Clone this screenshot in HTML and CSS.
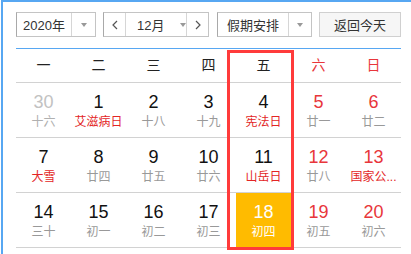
FILE: index.html
```html
<!DOCTYPE html>
<html lang="zh-CN">
  <head>
    <meta charset="UTF-8" />
    <title>万年历</title>
    <link rel="stylesheet" href="styles.css">
  </head>
  <body>
    <div class="calendar">
      <div class="toolbar">
        <div class="select year-select">
          <span class="select-text">2020年</span>
          <span class="select-arrow"><i class="caret"></i></span>
        </div>
        <div class="month-group">
          <span class="nav-btn">
            <svg width="6" height="10" viewBox="0 0 6 10"><polyline points="5,1 1,5 5,9" fill="none" stroke="#555" stroke-width="1.2"/></svg>
          </span>
          <span class="month-select"><span class="month-text">12月</span><i class="caret"></i></span>
          <span class="nav-btn">
            <svg width="6" height="10" viewBox="0 0 6 10"><polyline points="1,1 5,5 1,9" fill="none" stroke="#555" stroke-width="1.2"/></svg>
          </span>
        </div>
        <div class="select holiday-select">
          <span class="select-text">假期安排</span>
          <span class="select-arrow"><i class="caret"></i></span>
        </div>
        <button class="today-btn">返回今天</button>
      </div>

      <div class="grid">
        <div class="week">一</div>
        <div class="week">二</div>
        <div class="week">三</div>
        <div class="week">四</div>
        <div class="week">五</div>
        <div class="week weekend">六</div>
        <div class="week weekend">日</div>

        <div class="day other"><span class="num">30</span><span class="lunar">十六</span></div>
        <div class="day"><span class="num">1</span><span class="lunar fest">艾滋病日</span></div>
        <div class="day"><span class="num">2</span><span class="lunar">十八</span></div>
        <div class="day"><span class="num">3</span><span class="lunar">十九</span></div>
        <div class="day"><span class="num">4</span><span class="lunar fest">宪法日</span></div>
        <div class="day weekend"><span class="num">5</span><span class="lunar">廿一</span></div>
        <div class="day weekend"><span class="num">6</span><span class="lunar">廿二</span></div>

        <div class="day"><span class="num">7</span><span class="lunar fest">大雪</span></div>
        <div class="day"><span class="num">8</span><span class="lunar">廿四</span></div>
        <div class="day"><span class="num">9</span><span class="lunar">廿五</span></div>
        <div class="day"><span class="num">10</span><span class="lunar">廿六</span></div>
        <div class="day"><span class="num">11</span><span class="lunar fest">山岳日</span></div>
        <div class="day weekend"><span class="num">12</span><span class="lunar">廿八</span></div>
        <div class="day weekend"><span class="num">13</span><span class="lunar fest">国家公...</span></div>

        <div class="day"><span class="num">14</span><span class="lunar">三十</span></div>
        <div class="day"><span class="num">15</span><span class="lunar">初一</span></div>
        <div class="day"><span class="num">16</span><span class="lunar">初二</span></div>
        <div class="day"><span class="num">17</span><span class="lunar">初三</span></div>
        <div class="day today"><span class="num">18</span><span class="lunar">初四</span></div>
        <div class="day weekend"><span class="num">19</span><span class="lunar">初五</span></div>
        <div class="day weekend"><span class="num">20</span><span class="lunar">初六</span></div>

        <div class="mark"></div>
      </div>
    </div>
  </body>
</html>
```

FILE: styles.css
```css
body {
  margin: 0;
  overflow: hidden;
  background: #ffffff;
  font-family: "Liberation Sans", "Noto Sans CJK SC", sans-serif;
  color: #333;
}
.calendar {
  box-sizing: border-box;
  height: 254px;
  margin-left: 1px;
  border-top: 2px solid #57a7f2;
  border-left: 2px solid #57a7f2;
  padding: 10px 0 0 13px;
  overflow: hidden;
}
.toolbar {
  display: flex;
  height: 25px;
  font-size: 13px;
}
.select,
.month-group {
  display: flex;
  box-sizing: border-box;
  height: 25px;
  border: 1px solid #c4c4c4;
  border-left-color: #a9a9a9;
  background: #fff;
}
.select-text {
  display: flex;
  align-items: center;
  justify-content: center;
  white-space: nowrap;
  border-right: 1px solid #d6d6d6;
}
.select-arrow {
  display: flex;
  align-items: center;
  justify-content: center;
  flex: 1;
}
.caret {
  display: inline-block;
  flex: none;
  width: 0;
  height: 0;
  border-top: 4px solid #999;
  border-left: 3.5px solid transparent;
  border-right: 3.5px solid transparent;
}
.year-select {
  width: 80px;
}
.year-select .select-text {
  width: 54px;
}
.month-group {
  width: 106px;
  margin-left: 7px;
}
.nav-btn {
  display: flex;
  align-items: center;
  justify-content: center;
  width: 22px;
}
.month-select {
  display: flex;
  align-items: center;
  box-sizing: border-box;
  width: 62px;
  padding-left: 11px;
  border-left: 1px solid #d6d6d6;
  border-right: 1px solid #d6d6d6;
}
.month-text {
  white-space: nowrap;
  margin-right: 16px;
}
.holiday-select {
  width: 95px;
  margin-left: 8px;
}
.holiday-select .select-text {
  width: 70px;
}
.today-btn {
  width: 82px;
  height: 25px;
  margin-left: 7px;
  padding: 0;
  border: 1px solid #d0d0d0;
  background: #f6f6f6;
  font-family: inherit;
  font-size: 13px;
  color: #333;
}
.grid {
  position: relative;
  display: grid;
  grid-template-columns: repeat(7, 55px);
  width: 385px;
  margin-top: 11px;
  border-top: 1px solid #57a7f2;
}
.week {
  height: 33px;
  line-height: 33px;
  text-align: center;
  font-size: 14px;
  color: #222;
  border-bottom: 1px solid #d2d2d2;
}
.week.weekend {
  color: #e8363b;
}
.day {
  display: flex;
  flex-direction: column;
  align-items: center;
  box-sizing: border-box;
  height: 55px;
  padding-top: 9px;
  border-bottom: 1px solid #d2d2d2;
}
.num {
  font-size: 18px;
  line-height: 20px;
  color: #111;
}
.lunar {
  font-size: 12px;
  line-height: 16px;
  margin-top: 2px;
  color: #999;
  white-space: nowrap;
}
.day.weekend .num {
  color: #e8363b;
}
.lunar.fest {
  color: #e32626;
}
.day.other .num {
  color: #c2c2c2;
}
.day.other .lunar {
  color: #b0b0b0;
}
.day.today {
  background: #ffbb00;
}
.day.today .num,
.day.today .lunar {
  color: #ffffff;
}
.mark {
  position: absolute;
  left: 211px;
  top: 1px;
  width: 67px;
  height: 200px;
  box-sizing: border-box;
  border: 3px solid #ff3b3b;
}
```
